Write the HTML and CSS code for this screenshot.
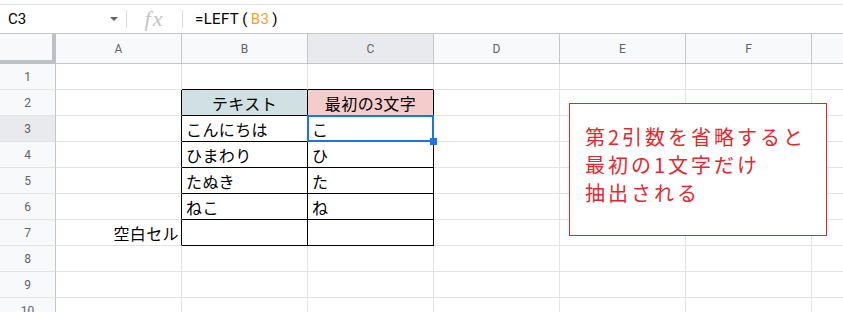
FILE: index.html
```html
<!DOCTYPE html>
<html lang="ja">
<head>
    <meta charset="UTF-8">
    <title>LEFT関数</title>
    <link rel="stylesheet" href="styles.css">
</head>
<body>

    <div class="formula-bar">
        <div class="name-box">
            <span>C3</span>
            <span class="name-arrow"></span>
        </div>
        <div class="fx-box"><span class="fx">fx</span></div>
        <div class="formula">=LEFT<span class="paren">(</span><span class="ref">B3</span><span class="paren">)</span></div>
    </div>

    <div class="sheet">
        <!-- header row -->
        <div class="corner"></div>
        <div class="col-head">A</div>
        <div class="col-head">B</div>
        <div class="col-head active">C</div>
        <div class="col-head">D</div>
        <div class="col-head">E</div>
        <div class="col-head">F</div>
        <div class="col-head last"></div>

        <!-- row 1 -->
        <div class="row-head">1</div>
        <div class="cell"></div>
        <div class="cell tb-top"></div>
        <div class="cell tb-top"></div>
        <div class="cell"></div>
        <div class="cell"></div>
        <div class="cell"></div>
        <div class="cell last"></div>

        <!-- row 2 -->
        <div class="row-head">2</div>
        <div class="cell tb-left"></div>
        <div class="cell tb center bg-text">テキスト</div>
        <div class="cell tb center bg-result">最初の3文字</div>
        <div class="cell"></div>
        <div class="cell"></div>
        <div class="cell"></div>
        <div class="cell last"></div>

        <!-- row 3 -->
        <div class="row-head active">3</div>
        <div class="cell tb-left"></div>
        <div class="cell tb">こんにちは</div>
        <div class="cell tb selected">こ</div>
        <div class="cell"></div>
        <div class="cell"></div>
        <div class="cell"></div>
        <div class="cell last"></div>

        <!-- row 4 -->
        <div class="row-head">4</div>
        <div class="cell tb-left"></div>
        <div class="cell tb">ひまわり</div>
        <div class="cell tb">ひ</div>
        <div class="cell"></div>
        <div class="cell"></div>
        <div class="cell"></div>
        <div class="cell last"></div>

        <!-- row 5 -->
        <div class="row-head">5</div>
        <div class="cell tb-left"></div>
        <div class="cell tb">たぬき</div>
        <div class="cell tb">た</div>
        <div class="cell"></div>
        <div class="cell"></div>
        <div class="cell"></div>
        <div class="cell last"></div>

        <!-- row 6 -->
        <div class="row-head">6</div>
        <div class="cell tb-left"></div>
        <div class="cell tb">ねこ</div>
        <div class="cell tb">ね</div>
        <div class="cell"></div>
        <div class="cell"></div>
        <div class="cell"></div>
        <div class="cell last"></div>

        <!-- row 7 -->
        <div class="row-head">7</div>
        <div class="cell tb-left right">空白セル</div>
        <div class="cell tb"></div>
        <div class="cell tb"></div>
        <div class="cell"></div>
        <div class="cell"></div>
        <div class="cell"></div>
        <div class="cell last"></div>

        <!-- row 8 -->
        <div class="row-head">8</div>
        <div class="cell"></div>
        <div class="cell"></div>
        <div class="cell"></div>
        <div class="cell"></div>
        <div class="cell"></div>
        <div class="cell"></div>
        <div class="cell last"></div>

        <!-- row 9 -->
        <div class="row-head">9</div>
        <div class="cell"></div>
        <div class="cell"></div>
        <div class="cell"></div>
        <div class="cell"></div>
        <div class="cell"></div>
        <div class="cell"></div>
        <div class="cell last"></div>

        <!-- row 10 -->
        <div class="row-head">10</div>
        <div class="cell"></div>
        <div class="cell"></div>
        <div class="cell"></div>
        <div class="cell"></div>
        <div class="cell"></div>
        <div class="cell"></div>
        <div class="cell last"></div>

        <!-- drawing placed over the grid -->
        <div class="note">第2引数を省略すると<br>最初の1文字だけ<br>抽出される</div>
    </div>

</body>
</html>
```

FILE: styles.css
```css
:root {
    --grid-line: #e2e3e3;
    --head-line: #c4c7c5;
    --head-bg: #f8f9fa;
    --head-active-bg: #e8eaed;
    --head-text: #5f6368;
    --select-blue: #1a73e8;
    --note-red: #e6262d;
    --ref-orange: #f4a12c;
}

body, html {
    margin: 0;
    padding: 0;
    height: 100%;
    overflow: hidden;
    background: #ffffff;
    color: #000000;
    font-family: Roboto, "Noto Sans CJK JP", sans-serif;
}

/* Formula bar */
.formula-bar {
    display: flex;
    align-items: center;
    margin-top: 4px;
    height: 30px;
    box-sizing: border-box;
    border-top: 1px solid #e0e0e0;
    border-bottom: 1px solid var(--head-line);
}

.name-box {
    display: flex;
    align-items: center;
    justify-content: space-between;
    width: 127px;
    box-sizing: border-box;
    padding: 0 8px;
    font-size: 15px;
    border-right: 1px solid #dadce0;
    height: 18px;
}

.name-arrow {
    width: 0;
    height: 0;
    border-left: 4px solid transparent;
    border-right: 4px solid transparent;
    border-top: 4px solid var(--head-text);
}

.fx-box {
    width: 55px;
    height: 18px;
    display: flex;
    align-items: center;
    justify-content: center;
    border-right: 1px solid #dadce0;
}

.fx {
    font-family: "Liberation Serif", serif;
    font-style: italic;
    font-size: 22px;
    color: #c4c4c4;
    letter-spacing: 2px;
}

.formula {
    padding-left: 12px;
    font-size: 15px;
    letter-spacing: 0.4px;
}

.formula .paren {
    margin: 0 3px;
}

.formula .ref {
    color: var(--ref-orange);
}

/* Sheet grid */
.sheet {
    position: relative;
    display: grid;
    grid-template-columns: 56px repeat(6, 126px) 31px;
    grid-template-rows: 30px;
    grid-auto-rows: 26px;
}

.corner,
.col-head,
.row-head,
.cell {
    box-sizing: border-box;
    border-right: 1px solid var(--grid-line);
    border-bottom: 1px solid var(--grid-line);
}

.corner {
    background: var(--head-bg);
    border-right: 4px solid #bdc1c6;
    border-bottom: 4px solid #bdc1c6;
}

.col-head,
.row-head {
    display: flex;
    align-items: center;
    justify-content: center;
    background: var(--head-bg);
    color: var(--head-text);
    font-size: 12px;
}

.col-head {
    border-right-color: var(--head-line);
    border-bottom-color: var(--head-line);
}

.row-head {
    border-right-color: var(--head-line);
}

.col-head.active,
.row-head.active {
    background: var(--head-active-bg);
}

.col-head.last,
.cell.last {
    border-right: none;
}

.cell {
    display: flex;
    align-items: center;
    padding: 0 4px;
    font-family: "Noto Sans CJK JP", sans-serif;
    font-size: 16px;
    letter-spacing: 0.4px;
    line-height: 1;
    white-space: nowrap;
}

.cell.center {
    justify-content: center;
}

.cell.right {
    justify-content: flex-end;
    padding-right: 2px;
}

/* the bordered table B2:C7 */
.cell.tb-top {
    border-bottom-color: #000;
}

.cell.tb-left {
    border-right-color: #000;
}

.cell.tb {
    border-right-color: #000;
    border-bottom-color: #000;
}

.bg-text {
    background: #d0e0e3;
}

.bg-result {
    background: #f4cccc;
}

/* selected cell C3 */
.cell.selected {
    position: relative;
}

.cell.selected::after {
    content: '';
    position: absolute;
    top: -1px;
    left: -1px;
    right: -1px;
    bottom: -1px;
    border: 2px solid var(--select-blue);
}

.cell.selected::before {
    content: '';
    position: absolute;
    right: -4px;
    bottom: -4px;
    width: 7px;
    height: 7px;
    background: var(--select-blue);
    z-index: 2;
}

/* text box drawing */
.note {
    position: absolute;
    left: 569px;
    top: 69px;
    width: 258px;
    height: 133px;
    box-sizing: border-box;
    padding: 19px 0 0 15px;
    background: #ffffff;
    border: 1px solid var(--note-red);
    color: var(--note-red);
    font-family: "Noto Sans CJK JP", sans-serif;
    font-size: 20px;
    line-height: 28px;
    letter-spacing: 3px;
}
```
